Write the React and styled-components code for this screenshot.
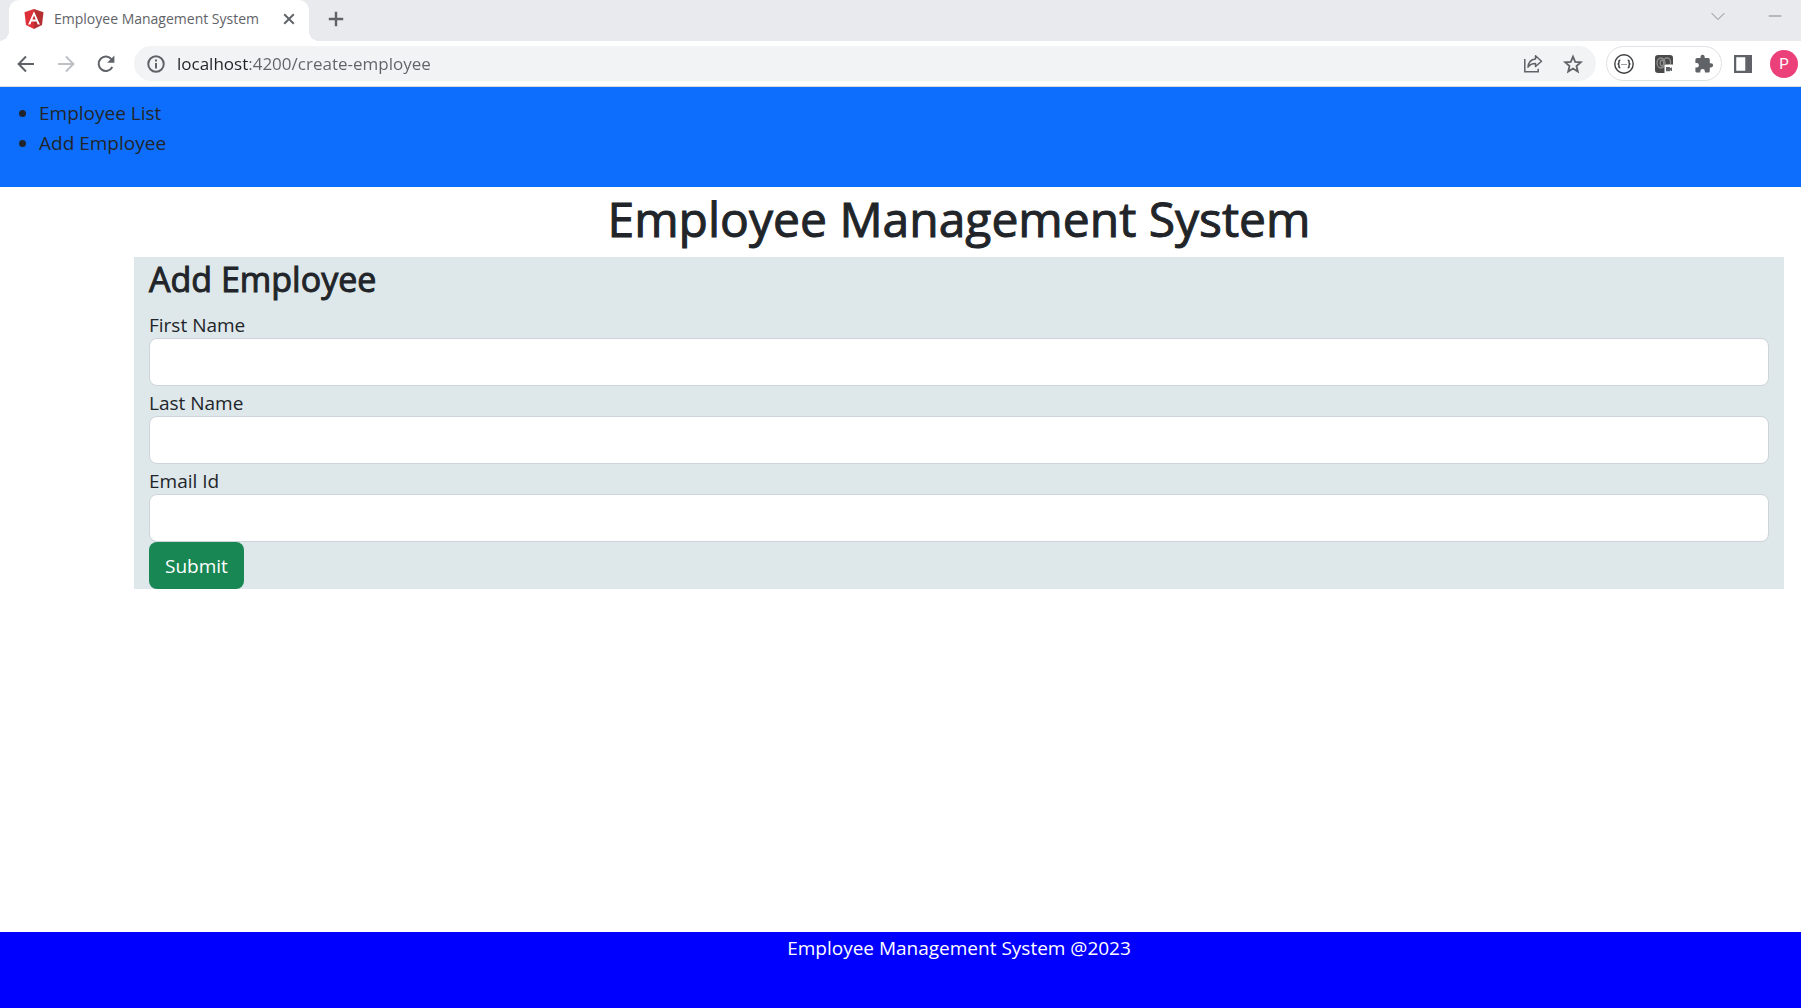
import React from "react";
import styled, { createGlobalStyle } from "styled-components";

const GlobalStyle = createGlobalStyle`
  *, *::before, *::after { box-sizing: border-box; }
  body {
    margin: 0;
    background: #fff;
    color: #212529;
    font-family: "Open Sans", "Noto Sans", sans-serif;
    font-size: 19px;
    line-height: 30px;
  }
  button, input { font: inherit; }
`;

const Page = styled.div`
  display: flex;
  flex-direction: column;
  min-height: 100vh;
`;

/* ---------- browser chrome ---------- */

const TabStrip = styled.div`
  display: flex;
  align-items: stretch;
  height: 41px;
  padding-left: 9px;
  background: #e8eaed;
`;

const Tab = styled.div`
  position: relative;
  display: flex;
  align-items: center;
  width: 300px;
  padding: 0 9px 3px 15px;
  border-radius: 10px 10px 0 0;
  background: #fff;

  &::before,
  &::after {
    content: "";
    position: absolute;
    bottom: 0;
    width: 10px;
    height: 10px;
  }
  &::before {
    right: 100%;
    background: radial-gradient(circle at 0 0, transparent 10px, #fff 10px);
  }
  &::after {
    left: 100%;
    background: radial-gradient(circle at 100% 0, transparent 10px, #fff 10px);
  }
`;

const TabTitle = styled.span`
  flex: 1;
  margin-left: 10px;
  color: #5f6368;
  font-size: 14px;
  line-height: 20px;
  white-space: nowrap;
`;

const IconButton = styled.button`
  display: flex;
  align-items: center;
  justify-content: center;
  flex: none;
  width: ${(p) => p.$width || 40}px;
  height: ${(p) => p.$height || 34}px;
  padding: 0;
  border: 0;
  background: none;
  color: ${(p) => p.$color || "#5f6368"};
`;

const WindowControls = styled.div`
  display: flex;
  margin-left: auto;
`;

const Toolbar = styled.div`
  display: flex;
  align-items: center;
  height: 46px;
  padding: 0 3px 0 6px;
  border-bottom: 1px solid #d9dce0;
  background: #fff;
`;

const AddressBar = styled.div`
  display: flex;
  align-items: center;
  flex: 1;
  height: 35px;
  margin: 0 10px 0 8px;
  padding: 0 3px 0 2px;
  border-radius: 18px;
  background: #f1f3f4;
`;

const AddressInput = styled.input`
  flex: 1;
  min-width: 0;
  height: 30px;
  padding: 0 0 0 1px;
  border: 0;
  outline: 0;
  font-size: 17px;
  color: transparent;
  background: linear-gradient(to right, #202124 72px, #5f6368 72px);
  -webkit-background-clip: text;
  background-clip: text;
`;

const Extensions = styled.div`
  display: flex;
  align-items: center;
  gap: 20px;
  height: 35px;
  padding: 0 7px;
  border: 1px solid #dfe1e5;
  border-radius: 18px;
`;

const Avatar = styled.button`
  width: 28px;
  height: 28px;
  margin: 0 0 0 6px;
  padding: 0;
  border: 0;
  border-radius: 50%;
  background: #ec407a;
  color: #fff;
  font-family: Roboto, sans-serif;
  font-size: 15px;
  line-height: 28px;
`;

/* ---------- application ---------- */

const NavBar = styled.nav`
  height: 100px;
  padding-top: 11px;
  background: #0d6efd;
`;

const NavList = styled.ul`
  margin: 0;
  padding-left: 39px;
`;

const NavLink = styled.a`
  color: inherit;
  text-decoration: none;
`;

const Main = styled.main`
  flex: 1;
  padding: 0 17px 0 134px;
`;

const Title = styled.h1`
  margin: 0 0 6px;
  font-size: 48px;
  font-weight: 400;
  -webkit-text-stroke: 1px currentColor;
  line-height: 64px;
  text-align: center;
`;

const Panel = styled.section`
  padding: 0 15px;
  background: #dee7ea;
`;

const PanelTitle = styled.h2`
  margin: 0;
  padding-bottom: 7px;
  font-size: 34px;
  font-weight: 400;
  -webkit-text-stroke: 1px currentColor;
  line-height: 44px;
`;

const Label = styled.label`
  display: block;
  padding-top: 4px;
  line-height: 26px;
`;

const TextField = styled.input`
  display: block;
  width: 100%;
  height: 48px;
  padding: 8px 15px;
  border: 1px solid #ced4da;
  border-radius: 8px;
  background: #fff;
  color: inherit;
`;

const SubmitButton = styled.button`
  display: block;
  height: 47px;
  padding: 0 16px;
  border: 0;
  border-radius: 8px;
  background: #198754;
  color: #fff;
`;

const Footer = styled.footer`
  height: 76px;
  padding-left: 117px;
  background: #0000ff;
  color: #fff;
  line-height: 32px;
  text-align: center;
`;

/* ---------- icons ---------- */

const Svg = ({ size = 20, children, ...rest }) => (
  <svg width={size} height={size} viewBox="0 0 20 20" fill="none" stroke="currentColor" strokeWidth="2" aria-hidden="true" {...rest}>
    {children}
  </svg>
);

const AngularIcon = () => (
  <Svg stroke="none">
    <path fill="#dd3038" d="M10 0 .5 3.3 2 16l8 4z" />
    <path fill="#b52e31" d="M10 0l9.5 3.3L18 16l-8 4z" />
    <path fill="#fff" fillRule="evenodd" d="M10 2.3 4.1 15.4h2.2l1.2-3h5l1.2 3h2.2zM10 6.4l1.7 4.2H8.3z" />
  </Svg>
);
const CloseIcon = () => <Svg size={12}><path strokeWidth="3.2" d="M2 2l16 16M18 2L2 18" /></Svg>;
const PlusIcon = () => <Svg size={16}><path strokeWidth="3" d="M10 1v18M1 10h18" /></Svg>;
const ChevronIcon = () => <Svg size={14}><path strokeWidth="1.4" d="M1 6l9 9 9-9" /></Svg>;
const MinusIcon = () => <Svg size={14}><path strokeWidth="1.4" d="M1 10h18" /></Svg>;
const BackIcon = () => <Svg><path d="M18 10H3M10 2.5L2.6 10l7.4 7.500" /></Svg>;
const ForwardIcon = () => <Svg><path d="M2 10h15M10 2.5l7.400 7.500-7.400 7.500" /></Svg>;
const ReloadIcon = () => (
  <Svg>
    <path d="M16.300 13A7.200 7.200 0 1 1 15.600 5.400" />
    <path fill="currentColor" stroke="none" d="M18.400 1.600v7.200h-7.200z" />
  </Svg>
);
const InfoIcon = () => (
  <Svg size={18}>
    <circle cx="10" cy="10" r="8.600" strokeWidth="2.200" />
    <path strokeWidth="2.200" d="M10 9v6M10 5v2.200" />
  </Svg>
);
const ShareIcon = () => (
  <Svg strokeWidth="1.500">
    <path d="M1.800 5v12.800h13.400v-3" />
    <path strokeLinejoin="round" d="M12.500 1.800l6 5.400-6 5.300V9.400C9 9.400 6.600 10.600 5 13.200c.4-4.600 3-7.600 7.500-8.100z" />
  </Svg>
);
const StarIcon = () => (
  <Svg>
    <path strokeWidth="1.800" d="M10 2.600l2.200 5.200 5.600.5-4.300 3.700 1.300 5.500L10 14.600l-4.800 2.900L6.500 12 2.200 8.300l5.600-.5z" />
  </Svg>
);
const BracesIcon = () => (
  <Svg stroke="#3c4043">
    <circle cx="10" cy="10" r="9.200" strokeWidth="1.400" />
    <path strokeWidth="1.500" d="M6.300 6.300c-1.500 0-1.300.8-1.300 2 0 .9-.2 1.500-1.300 1.700 1.100.2 1.300.8 1.300 1.700 0 1.200-.2 2 1.300 2M13.700 6.300c1.500 0 1.300.8 1.300 2 0 .9.2 1.500 1.300 1.700-1.100.2-1.300.8-1.300 1.700 0 1.200.2 2-1.300 2" />
    <path strokeWidth="1" strokeDasharray="1 1" d="M7.500 10.500h5" />
  </Svg>
);
const RecorderIcon = () => (
  <Svg stroke="none">
    <rect x="1" y="1" width="18" height="18" rx="3" fill="#4a4a4a" />
    <g fill="none" stroke="#8f8f8f" strokeWidth="1.300">
      <ellipse cx="7" cy="9" rx="4" ry="5" />
      <ellipse cx="8" cy="9" rx="1.800" ry="3" />
      <ellipse cx="13" cy="8" rx="3.600" ry="4" />
    </g>
    <rect x="10.500" y="10.500" width="9.500" height="9.500" rx="1.500" fill="#fff" />
    <path fill="#5f6368" d="M12 13h4v1.300l2-1v4l-2-1v1h-4z" />
  </Svg>
);
const PuzzleIcon = () => (
  <Svg stroke="none" fill="currentColor">
    <path d="M17 9.200h-1.200V5.800c0-1-.8-1.700-1.700-1.700h-3.400V2.900a2.100 2.100 0 0 0-4.200 0v1.200H3.100c-.9 0-1.700.8-1.700 1.700V9h1.200a2.300 2.300 0 0 1 0 4.600H1.400v3.300c0 .9.800 1.700 1.700 1.700h3.200v-1.200a2.300 2.300 0 0 1 4.600 0v1.200h3.200c.9 0 1.700-.8 1.700-1.700v-3.400H17a2.150 2.150 0 0 0 0-4.300z" />
  </Svg>
);
const SidePanelIcon = () => (
  <Svg size={18} stroke="none" fill="currentColor">
    <path fillRule="evenodd" d="M0 0h20v20H0zM2.500 2.500v15h10v-15z" />
  </Svg>
);

/* ---------- views ---------- */

function BrowserChrome() {
  return (
    <header>
      <TabStrip>
        <Tab>
          <AngularIcon />
          <TabTitle>Employee Management System</TabTitle>
          <IconButton $width={22} $height={22} aria-label="Close tab"><CloseIcon /></IconButton>
        </Tab>
        <IconButton $width={54} $height={38} aria-label="New tab"><PlusIcon /></IconButton>
        <WindowControls>
          <IconButton $width={62} $height={32} aria-label="Search tabs" $color="#80868b"><ChevronIcon /></IconButton>
          <IconButton $width={52} $height={32} aria-label="Minimize" $color="#80868b"><MinusIcon /></IconButton>
        </WindowControls>
      </TabStrip>
      <Toolbar>
        <IconButton aria-label="Back"><BackIcon /></IconButton>
        <IconButton aria-label="Forward" $color="#bdc1c6"><ForwardIcon /></IconButton>
        <IconButton aria-label="Reload"><ReloadIcon /></IconButton>
        <AddressBar>
          <IconButton aria-label="Site information"><InfoIcon /></IconButton>
          <AddressInput aria-label="Address" defaultValue="localhost:4200/create-employee" />
          <IconButton aria-label="Share"><ShareIcon /></IconButton>
          <IconButton aria-label="Bookmark"><StarIcon /></IconButton>
        </AddressBar>
        <Extensions>
          <IconButton $width={20} aria-label="Braces extension"><BracesIcon /></IconButton>
          <IconButton $width={20} aria-label="Recorder extension"><RecorderIcon /></IconButton>
          <IconButton $width={20} aria-label="Extensions"><PuzzleIcon /></IconButton>
        </Extensions>
        <IconButton $width={42} aria-label="Side panel"><SidePanelIcon /></IconButton>
        <Avatar aria-label="Profile">P</Avatar>
      </Toolbar>
    </header>
  );
}

const fields = [
  { id: "firstName", label: "First Name", type: "text" },
  { id: "lastName", label: "Last Name", type: "text" },
  { id: "emailId", label: "Email Id", type: "text" },
];

export default function App() {
  return (
    <Page>
      <GlobalStyle />
      <BrowserChrome />
      <NavBar>
        <NavList>
          <li><NavLink href="#employees">Employee List</NavLink></li>
          <li><NavLink href="#create-employee">Add Employee</NavLink></li>
        </NavList>
      </NavBar>
      <Main>
        <Title>Employee Management System</Title>
        <Panel>
          <PanelTitle>Add Employee</PanelTitle>
          <form onSubmit={(e) => e.preventDefault()}>
            {fields.map((f) => (
              <div key={f.id}>
                <Label htmlFor={f.id}>{f.label}</Label>
                <TextField id={f.id} name={f.id} type={f.type} />
              </div>
            ))}
            <SubmitButton type="submit">Submit</SubmitButton>
          </form>
        </Panel>
      </Main>
      <Footer>Employee Management System @2023</Footer>
    </Page>
  );
}
